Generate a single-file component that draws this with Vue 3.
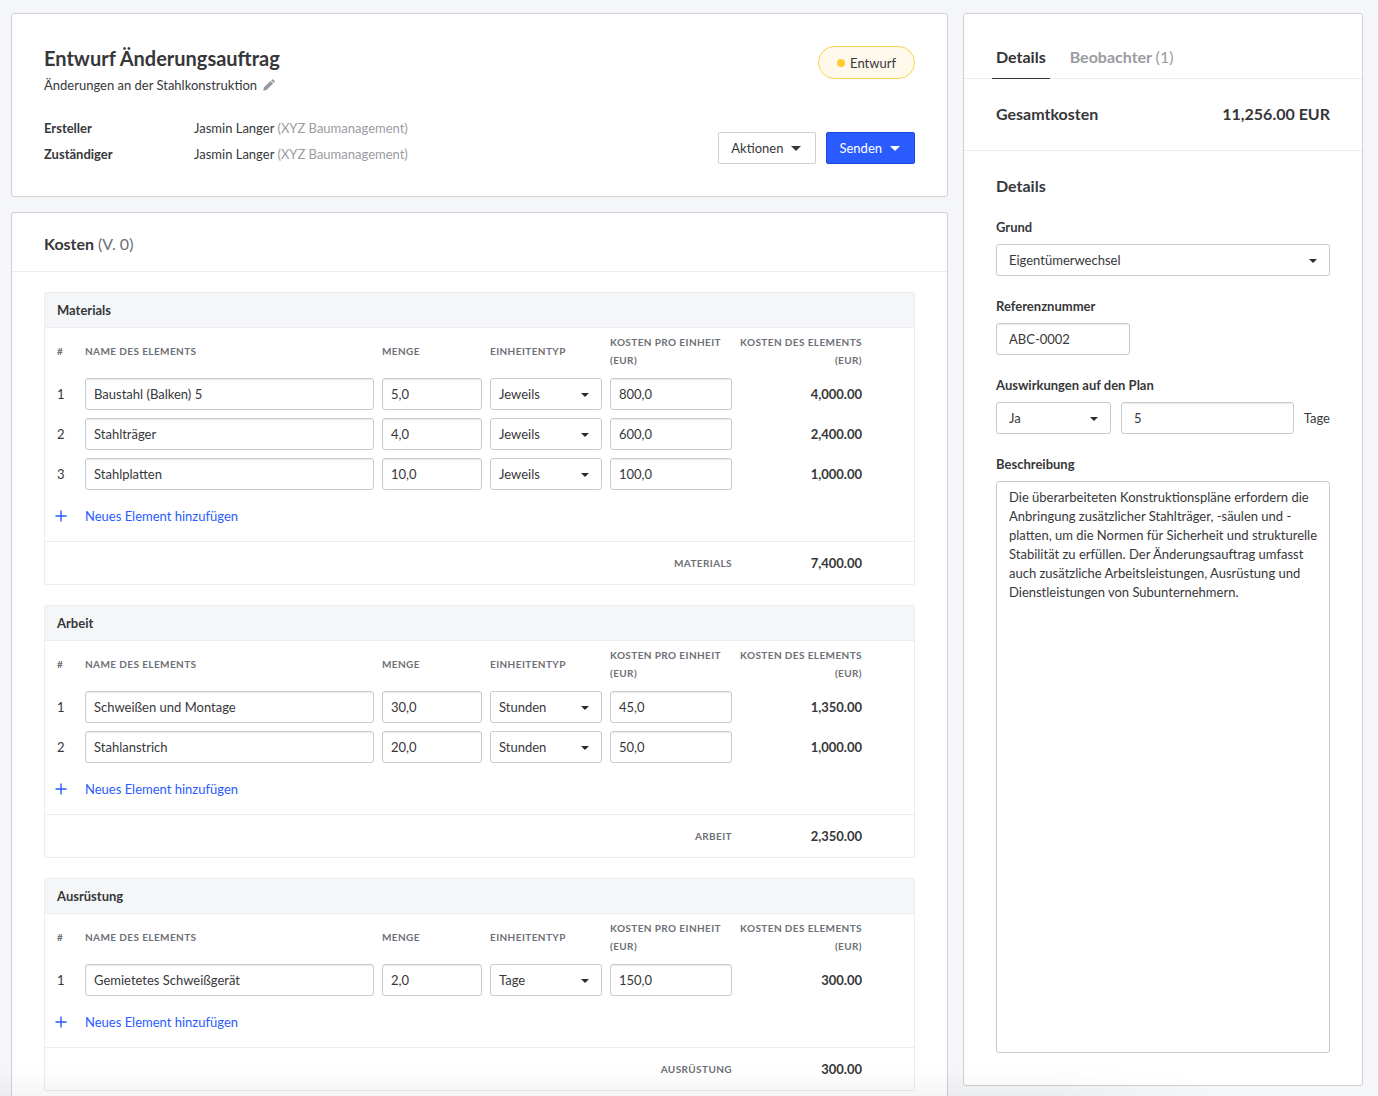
<script setup>
import { ref, reactive } from 'vue'

const reason = ref('Eigentümerwechsel')
const reference = ref('ABC-0002')
const impact = ref('Ja')
const impactDays = ref('5')
const description = ref(
  'Die überarbeiteten Konstruktionspläne erfordern die Anbringung zusätzlicher Stahlträger, -säulen und -platten, um die Normen für Sicherheit und strukturelle Stabilität zu erfüllen. Der Änderungsauftrag umfasst auch zusätzliche Arbeitsleistungen, Ausrüstung und Dienstleistungen von Subunternehmern.'
)
const people = [
  { role: 'Ersteller', name: 'Jasmin Langer', company: '(XYZ Baumanagement)' },
  { role: 'Zuständiger', name: 'Jasmin Langer', company: '(XYZ Baumanagement)' }
]
const units = ['Jeweils', 'Stunden', 'Tage']
const sections = reactive([
  {
    title: 'Materials',
    total: '7,400.00',
    items: [
      { name: 'Baustahl (Balken) 5', qty: '5,0', unit: 'Jeweils', price: '800,0', cost: '4,000.00' },
      { name: 'Stahlträger', qty: '4,0', unit: 'Jeweils', price: '600,0', cost: '2,400.00' },
      { name: 'Stahlplatten', qty: '10,0', unit: 'Jeweils', price: '100,0', cost: '1,000.00' }
    ]
  },
  {
    title: 'Arbeit',
    total: '2,350.00',
    items: [
      { name: 'Schweißen und Montage', qty: '30,0', unit: 'Stunden', price: '45,0', cost: '1,350.00' },
      { name: 'Stahlanstrich', qty: '20,0', unit: 'Stunden', price: '50,0', cost: '1,000.00' }
    ]
  },
  {
    title: 'Ausrüstung',
    total: '300.00',
    items: [{ name: 'Gemietetes Schweißgerät', qty: '2,0', unit: 'Tage', price: '150,0', cost: '300.00' }]
  }
])
</script>

<template>
  <div class="page">
    <main class="main">
      <section class="card summary">
        <div class="summary-info">
          <h1>Entwurf Änderungsauftrag</h1>
          <p class="subtitle">
            Änderungen an der Stahlkonstruktion
            <button class="icon-button" type="button" aria-label="Titel bearbeiten">
              <svg width="12" height="12" viewBox="0 0 12 12">
                <path d="M0.3 11.7 0.9 8.5 7.5 1.9 10.1 4.5 3.5 11.1Z M8.1 1.3 9 0.5Q9.6 0 10.2 0.5L11.5 1.8Q12 2.4 11.5 3L10.7 3.9Z" fill="#96969e" />
              </svg>
            </button>
          </p>
          <dl class="people">
            <div v-for="p in people" :key="p.role" class="person">
              <dt>{{ p.role }}</dt>
              <dd>{{ p.name }} <span class="muted">{{ p.company }}</span></dd>
            </div>
          </dl>
        </div>
        <div class="summary-side">
          <span class="badge"><i class="dot"></i>Entwurf</span>
          <div class="actions">
            <button class="btn" type="button">
              Aktionen
              <svg width="10" height="5" viewBox="0 0 10 5"><path d="M0 0H10L5 5Z" fill="currentColor" /></svg>
            </button>
            <button class="btn primary" type="button">
              Senden
              <svg width="10" height="5" viewBox="0 0 10 5"><path d="M0 0H10L5 5Z" fill="currentColor" /></svg>
            </button>
          </div>
        </div>
      </section>

      <section class="card costs">
        <h2 class="costs-head">Kosten <span>(V. 0)</span></h2>
        <div class="costs-body">
          <section v-for="s in sections" :key="s.title" class="group">
            <h3>{{ s.title }}</h3>
            <table>
              <colgroup>
                <col class="c-num" />
                <col />
                <col class="c-qty" />
                <col class="c-unit" />
                <col class="c-price" />
                <col class="c-cost" />
                <col class="c-end" />
              </colgroup>
              <thead>
                <tr>
                  <th class="num">#</th>
                  <th>Name des Elements</th>
                  <th>Menge</th>
                  <th>Einheitentyp</th>
                  <th>Kosten pro Einheit (EUR)</th>
                  <th class="right item-cost">Kosten des Elements (EUR)</th>
                  <td></td>
                </tr>
              </thead>
              <tbody>
                <tr v-for="(item, i) in s.items" :key="i">
                  <td class="num">{{ i + 1 }}</td>
                  <td><input v-model="item.name" class="field" type="text" aria-label="Name des Elements" /></td>
                  <td><input v-model="item.qty" class="field" type="text" aria-label="Menge" /></td>
                  <td>
                    <span class="select">
                      <select v-model="item.unit" class="field" aria-label="Einheitentyp">
                        <option v-for="u in units" :key="u">{{ u }}</option>
                      </select>
                      <svg width="8" height="4" viewBox="0 0 8 4"><path d="M0 0H8L4 4Z" fill="#2b2b2f" /></svg>
                    </span>
                  </td>
                  <td><input v-model="item.price" class="field" type="text" aria-label="Kosten pro Einheit (EUR)" /></td>
                  <td class="right amount">{{ item.cost }}</td>
                  <td></td>
                </tr>
                <tr class="add-row">
                  <td colspan="7">
                    <button class="add" type="button">
                      <svg width="12" height="12" viewBox="0 0 12 12"><path d="M6 0.5V11.5M0.5 6H11.5" stroke="currentColor" stroke-width="1.4" /></svg>
                      Neues Element hinzufügen
                    </button>
                  </td>
                </tr>
              </tbody>
              <tfoot>
                <tr>
                  <th class="right" colspan="5">{{ s.title }}</th>
                  <td class="right amount">{{ s.total }}</td>
                  <td></td>
                </tr>
              </tfoot>
            </table>
          </section>
        </div>
      </section>
    </main>

    <aside class="card side">
      <nav class="tabs">
        <a class="tab active" href="#details">Details</a>
        <a class="tab" href="#beobachter">Beobachter <span>(1)</span></a>
      </nav>
      <div class="total">
        <span>Gesamtkosten</span>
        <span>11,256.00 EUR</span>
      </div>
      <form class="details" @submit.prevent>
        <h2>Details</h2>
        <div class="form-item">
          <label for="reason">Grund</label>
          <span class="select">
            <select id="reason" v-model="reason" class="field wide">
              <option>Eigentümerwechsel</option>
            </select>
            <svg width="8" height="4" viewBox="0 0 8 4"><path d="M0 0H8L4 4Z" fill="#2b2b2f" /></svg>
          </span>
        </div>
        <div class="form-item">
          <label for="reference">Referenznummer</label>
          <input id="reference" v-model="reference" class="field wide short" type="text" />
        </div>
        <div class="form-item">
          <label for="impact">Auswirkungen auf den Plan</label>
          <div class="impact">
            <span class="select">
              <select id="impact" v-model="impact" class="field wide">
                <option>Ja</option>
                <option>Nein</option>
              </select>
              <svg width="8" height="4" viewBox="0 0 8 4"><path d="M0 0H8L4 4Z" fill="#2b2b2f" /></svg>
            </span>
            <input id="days" v-model="impactDays" class="field wide" type="text" />
            <label class="unit" for="days">Tage</label>
          </div>
        </div>
        <div class="form-item grow">
          <label for="description">Beschreibung</label>
          <textarea id="description" v-model="description"></textarea>
        </div>
      </form>
    </aside>
    <div class="fade"></div>
  </div>
</template>

<style>
body {
  background: #f4f6f8;
}
</style>

<style scoped>
.page,
.page * {
  box-sizing: border-box;
}
.page {
  display: grid;
  grid-template-columns: minmax(0, 1fr) 400px;
  column-gap: 15px;
  min-height: 100vh;
  padding: 13px 15px 0 11px;
  color: #37373a;
  font: 13px/20px Lato, "Noto Sans", sans-serif;
}
h1, h2, h3, p, dl, dd {
  margin: 0;
}
button, input, select, textarea {
  font: inherit;
  color: inherit;
}
.card {
  background: #fff;
  border: 1px solid #cfd0d7;
  border-radius: 3px;
}
.main {
  display: flex;
  flex-direction: column;
  gap: 15px;
}
.muted {
  color: #9b9ba2;
}

.summary {
  display: flex;
  justify-content: space-between;
  padding: 32px 32px 29px;
}
h1 {
  font-size: 20px;
  line-height: 24px;
  font-weight: 700;
}
.subtitle {
  display: flex;
  align-items: center;
  gap: 6px;
  margin-top: 5px;
}
.icon-button {
  display: flex;
  padding: 0;
  border: 0;
  background: none;
}
.people {
  margin-top: 20px;
}
.person {
  display: flex;
  line-height: 26px;
}
dt {
  width: 150px;
  font-weight: 700;
}
.summary-side {
  display: flex;
  flex-direction: column;
  align-items: flex-end;
  justify-content: space-between;
  padding-bottom: 3px;
}
.badge {
  display: flex;
  align-items: center;
  gap: 5px;
  height: 33px;
  padding: 0 18px;
  border: 1px solid #fbd24a;
  border-radius: 17px;
  background: #fff9ec;
}
.dot {
  width: 8px;
  height: 8px;
  border-radius: 50%;
  background: #ffcb2f;
}
.actions {
  display: flex;
  gap: 10px;
}
.btn {
  display: flex;
  align-items: center;
  gap: 8px;
  height: 32px;
  padding: 0 14px 0 12px;
  border: 1px solid #cfd0d7;
  border-radius: 2px;
  background: #fff;
}
.btn.primary {
  border-color: #1c46d8;
  background: #2a5bff;
  color: #fff;
}

.costs {
  flex: 1;
  border-bottom: 0;
  border-bottom-left-radius: 0;
  border-bottom-right-radius: 0;
}
.costs-head {
  padding: 21px 32px 17px;
  border-bottom: 1px solid #ececee;
  font-size: 16px;
  line-height: 20px;
  font-weight: 700;
}
.costs-head span {
  color: #6d7078;
  font-weight: 400;
}
.costs-body {
  display: flex;
  flex-direction: column;
  gap: 20px;
  padding: 20px 32px 5px;
}
.group {
  border: 1px solid #ececee;
  border-radius: 2px;
}
h3 {
  height: 35px;
  padding: 0 12px;
  border-bottom: 1px solid #ececee;
  background: #f4f6f8;
  font-size: 13px;
  line-height: 34px;
  font-weight: 700;
}
table {
  width: 100%;
  table-layout: fixed;
  border-collapse: collapse;
}
.c-num { width: 36px; }
.c-qty { width: 108px; }
.c-unit { width: 120px; }
.c-price { width: 130px; }
.c-cost { width: 130px; }
.c-end { width: 48px; }
th, td {
  padding: 0 4px;
  text-align: left;
}
th {
  color: #6d7078;
  font-size: 10px;
  line-height: 18px;
  font-weight: 700;
  letter-spacing: 0.04em;
  text-transform: uppercase;
}
thead tr {
  height: 46px;
}
tbody tr {
  height: 40px;
}
tbody .add-row {
  height: 47px;
}
tfoot tr {
  height: 43px;
  border-top: 1px solid #ececee;
}
.num {
  padding-left: 12px;
}
.right {
  text-align: right;
}
.item-cost {
  padding-left: 0;
}
.amount {
  font-weight: 700;
}
.add {
  display: flex;
  align-items: center;
  gap: 18px;
  padding: 0 6px 2px;
  border: 0;
  background: none;
  color: #2a5bff;
}

.field {
  display: block;
  width: 100%;
  height: 32px;
  padding: 0 8px;
  border: 1px solid #c9cace;
  border-radius: 3px;
  background: #fff;
  appearance: none;
}
input.field {
  box-shadow: inset 0 1px 1px #ececee;
}
.field.wide {
  padding: 0 12px;
}
.field.short {
  width: 134px;
}
.select {
  display: block;
  position: relative;
}
.select svg {
  position: absolute;
  right: 13px;
  top: 15px;
  pointer-events: none;
}

.side {
  display: flex;
  flex-direction: column;
  margin-bottom: 10px;
}
.tabs {
  display: flex;
  gap: 16px;
  padding: 32px 28px 0;
  box-shadow: inset 0 -1px #ececee;
}
.tab {
  padding: 0 4px 11px;
  border-bottom: 1px solid transparent;
  color: #9b9ba2;
  font-size: 16px;
  line-height: 21px;
  font-weight: 700;
  text-decoration: none;
}
.tab span {
  font-weight: 400;
}
.tab.active {
  border-color: #333335;
  color: #333335;
}
.total {
  display: flex;
  justify-content: space-between;
  padding: 25px 32px 26px;
  border-bottom: 1px solid #ececee;
  font-size: 16px;
  font-weight: 700;
}
.details {
  display: flex;
  flex: 1;
  flex-direction: column;
  gap: 20px;
  padding: 25px 32px 32px;
}
.details h2 {
  padding-bottom: 1px;
  font-size: 16px;
  font-weight: 700;
}
.form-item {
  display: flex;
  flex-direction: column;
  gap: 7px;
}
.form-item label {
  font-weight: 700;
}
.form-item .unit {
  font-weight: 400;
}
.impact {
  display: grid;
  grid-template-columns: 115px 1fr auto;
  column-gap: 10px;
  align-items: center;
}
.grow {
  flex: 1;
}
textarea {
  flex: 1;
  padding: 6px 12px;
  border: 1px solid #c9cace;
  border-radius: 3px;
  background: #fff;
  line-height: 19px;
  resize: none;
}
.fade {
  position: fixed;
  left: 0;
  right: 0;
  bottom: 0;
  height: 28px;
  background: linear-gradient(rgba(0, 0, 0, 0), rgba(0, 0, 0, 0.04));
  mask-image: linear-gradient(90deg, #000 75%, transparent 88%);
  pointer-events: none;
}
</style>
